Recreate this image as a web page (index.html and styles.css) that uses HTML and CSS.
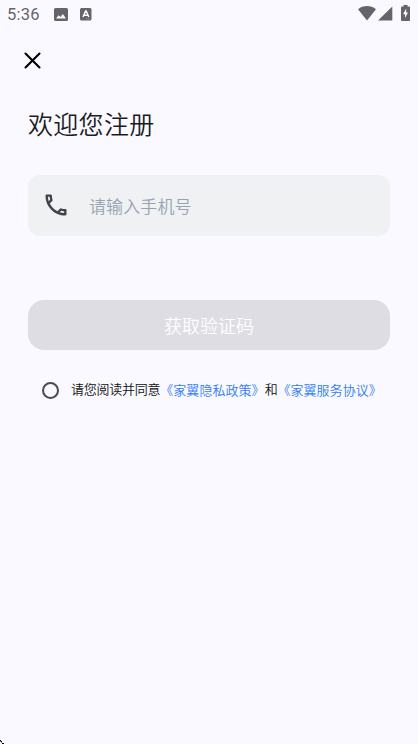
FILE: index.html
```html
<!DOCTYPE html>
<html lang="zh-CN">
<head>
<meta charset="utf-8">
<title>注册</title>
<link rel="stylesheet" href="styles.css">
</head>
<body>
<header class="status">
  <span class="time">5:36</span>
  <svg class="picture" width="14" height="14" viewBox="0 0 14 14"><path fill="#656569" fill-rule="evenodd" d="M1.500 0h11Q14 0 14 1.500v10q0 1.500-1.500 1.500h-11Q0 13 0 11.500v-10Q0 0 1.500 0zM2 10.500h10L8.800 6 6.500 9 4.600 7.200z"/></svg>
  <svg class="keyboard" width="12" height="13" viewBox="0 0 12 13"><rect width="11.500" height="12.500" rx="1.500" fill="#656569"/><path d="M3 9 5.600 3h.6L8.800 9M4 7.200h3.800" fill="none" stroke="#fff" stroke-width="1.400"/><path d="M6 10.800h4" stroke="#aaa" stroke-width=".8" stroke-dasharray="1 .6"/></svg>
  <span class="system">
    <svg width="18" height="15" viewBox="0 0 18 15"><path fill="#656569" d="M0 3.300Q4 0 9 0t9 3.300L9 14.500z"/></svg>
    <svg width="15" height="15" viewBox="0 0 15 15"><path fill="#656569" d="M14.300.5v14H0z"/></svg>
    <svg class="battery" width="9" height="16" viewBox="0 0 9 16"><path fill="#656569" d="M2.500 0h4v1.500H8q1 0 1 1V15q0 1-1 1H1q-1 0-1-1V2.500q0-1 1-1h1.500z"/><path fill="#fff" d="M5.200 3.500 2 9.300h2V13l3-5.500H5.200z"/></svg>
  </span>
</header>
<main class="page">
  <button class="close" aria-label="关闭"><svg width="18" height="18" viewBox="0 0 18 18"><path d="m1.500 2.500 14 14m0-14-14 14" fill="none" stroke="#000" stroke-width="2.100" stroke-linecap="round"/></svg></button>
  <h1 class="title">欢迎您注册</h1>
  <label class="field">
    <svg width="28" height="28" viewBox="0 0 24 24"><path fill="#40434b" d="M6.540 5c.06.89.21 1.760.45 2.590l-1.200 1.200c-.41-1.200-.67-2.470-.76-3.790h1.510m9.860 12.020c.85.24 1.720.39 2.600.45v1.490c-1.320-.09-2.590-.35-3.800-.75l1.200-1.190M7.500 3H4c-.55 0-1 .45-1 1 0 9.390 7.610 17 17 17 .55 0 1-.45 1-1v-3.490c0-.55-.45-1-1-1-1.240 0-2.450-.2-3.570-.57-.1-.04-.21-.05-.31-.05-.26 0-.51.100-.71.290l-2.200 2.200c-2.830-1.450-5.150-3.760-6.590-6.590l2.200-2.200c.28-.28.36-.67.25-1.020C8.700 6.450 8.500 5.250 8.500 4c0-.55-.45-1-1-1z"/></svg>
    <span class="placeholder">请输入手机号</span>
  </label>
  <button class="submit">获取验证码</button>
  <div class="terms">
    <span class="radio"></span>
    <p><span class="plain">请您阅读并同意</span><a>《家翼隐私政策》</a><span class="plain">和</span><a>《家翼服务协议》</a></p>
  </div>
</main>
<svg class="corner" width="4" height="4" viewBox="0 0 4 4" shape-rendering="crispEdges"><path d="M0 0h1v1H0zM1 1h1v1H1zM2 3h2v1H2z"/><path fill="#888" d="M0 1h1v1H0zM1 2h1v1H1z"/></svg>
</body>
</html>
```
FILE: styles.css
```css
* { box-sizing: border-box; }
body {
  margin: 0;
  height: 744px;
  overflow: hidden;
  position: relative;
  background: #faf9ff;
  color: #1c1c1f;
  font-family: "Noto Sans CJK SC", sans-serif;
  font-weight: 350;
}
svg { display: block; flex: none; }
button { border: 0; padding: 0; font: inherit; }
.status { height: 29px; padding: 0 8px 0 7px; display: flex; align-items: center; }
.time { width: 47px; font: 16.500px/29px Roboto, sans-serif; letter-spacing: .2px; color: #656569; }
.picture { margin-top: 1px; }
.keyboard { margin-left: 12px; }
.system { display: flex; align-items: center; margin-left: auto; margin-top: -3px; }
.system svg + svg { margin-left: 2px; }
.system .battery { margin-left: 8px; }
.page { padding: 0 28px; }
.close { display: block; margin: 22px 0 0 -4px; background: none; }
.title {
  margin: 36px 0 0;
  font-size: 25px;
  line-height: 36px;
  font-weight: 350;
  letter-spacing: .3px;
}
.field {
  height: 61px;
  margin-top: 34px;
  padding: 0 0 1px 14px;
  display: flex;
  align-items: center;
  border-radius: 12px;
  background: #eff1f3;
}
.placeholder { margin-left: 19px; font-size: 17px; letter-spacing: .1px; color: #98a2b2; }
.submit {
  display: block;
  width: 100%;
  height: 50px;
  margin-top: 64px;
  border-radius: 16px;
  background: #dedde3;
  color: #fff;
  font-size: 18px;
}
.terms { display: flex; align-items: center; height: 20px; margin-top: 30px; padding-left: 14px; }
.radio { width: 17px; height: 17px; border: 2px solid #484b52; border-radius: 50%; }
.terms p { margin: 0 0 0 12px; font-size: 13px; line-height: 20px; white-space: nowrap; }
.terms a { color: #2f7df5; letter-spacing: .05px; }
.plain { letter-spacing: -.25px; position: relative; top: -1px; color: #111; }
.corner { position: absolute; left: 0; bottom: 0; }
```
